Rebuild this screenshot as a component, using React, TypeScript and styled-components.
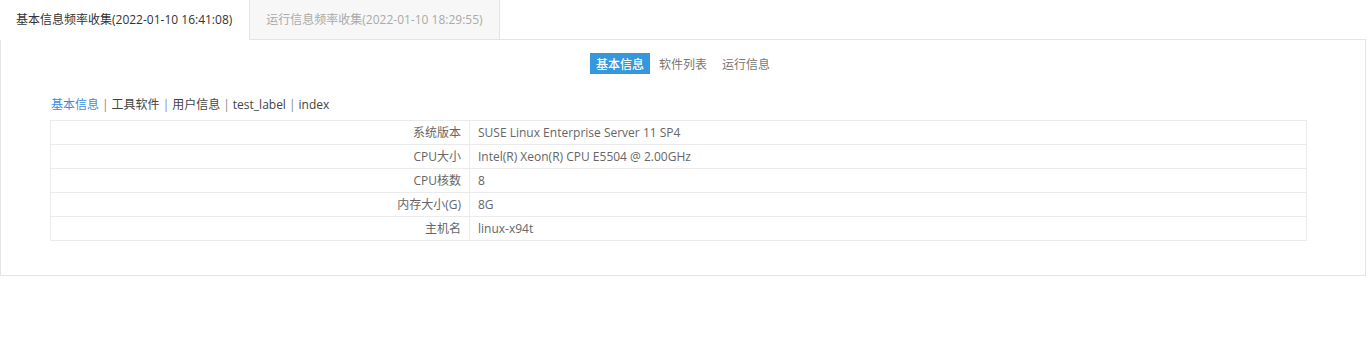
import styled, { createGlobalStyle } from 'styled-components';

const GlobalStyle = createGlobalStyle`
	body {
		margin: 0;
		background: #fff;
		font-family: "Open Sans", "Noto Sans CJK SC", sans-serif;
		font-size: 12px;
		color: #333;
	}
`;

const Wrapper = styled.div`
	width: 1366px;
`;

const TabBar = styled.ul`
	display: flex;
	margin: 0;
	padding: 0;
	list-style: none;
	height: 39px;
	border-bottom: 1px solid #e4e4e4;
`;

const Tab = styled.li<{ $active?: boolean }>`
	display: flex;
	align-items: center;
	height: 38px;
	padding: 0 16px 1px;
	margin-bottom: -1px;
	box-sizing: content-box;
	font-size: 12px;
	color: ${(p) => (p.$active ? '#333' : '#aaa')};
	background: ${(p) => (p.$active ? '#fff' : '#f7f7f7')};
	border: 1px solid ${(p) => (p.$active ? 'transparent' : '#e4e4e4')};
	border-bottom: 1px solid ${(p) => (p.$active ? '#fff' : '#e4e4e4')};
	border-top: none;
	${(p) => (p.$active ? 'border-left: none;' : 'border-left-color: #e4e4e4;')}
`;

const Panel = styled.div`
	border: 1px solid #e4e4e4;
	border-top: none;
	padding: 13px 59px 34px 49px;
`;

const ButtonGroup = styled.div`
	display: flex;
	justify-content: center;
	gap: 3px;
	margin-right: -10px;
`;

const ViewButton = styled.span<{ $active?: boolean }>`
	display: inline-flex;
	align-items: center;
	height: 21px;
	padding: 0 6px;
	font-size: 12px;
	color: ${(p) => (p.$active ? '#fff' : '#777')};
	background: ${(p) => (p.$active ? '#3498db' : 'transparent')};
	font-weight: ${(p) => (p.$active ? 500 : 400)};
`;

const SubNav = styled.div`
	margin-top: 21px;
	line-height: 20px;
	height: 20px;
	margin-bottom: 5px;
	color: #555;
	padding-left: 1px;
`;

const SubLink = styled.span<{ $active?: boolean }>`
	color: ${(p) => (p.$active ? '#3c8dde' : '#444')};
`;

const Sep = styled.span`
	color: #888;
	margin: 0 3px;
`;

const InfoTable = styled.table`
	width: 1257px;
	border-collapse: collapse;
	td {
		height: 22px;
		padding: 0 8px 1px;
		border: 1px solid #ebebeb;
		color: #666;
		font-size: 12px;
	}
	td.label {
		width: 402px;
		text-align: right;
	}
`;

const rows: [string, string][] = [
	['系统版本', 'SUSE Linux Enterprise Server 11 SP4'],
	['CPU大小', 'Intel(R) Xeon(R) CPU E5504 @ 2.00GHz'],
	['CPU核数', '8'],
	['内存大小(G)', '8G'],
	['主机名', 'linux-x94t'],
];

const subLinks = ['基本信息', '工具软件', '用户信息', 'test_label', 'index'];

export default function App() {
	return (
		<Wrapper>
			<GlobalStyle />
			<TabBar>
				<Tab $active>基本信息频率收集(2022-01-10 16:41:08)</Tab>
				<Tab>运行信息频率收集(2022-01-10 18:29:55)</Tab>
			</TabBar>
			<Panel>
				<ButtonGroup>
					<ViewButton $active>基本信息</ViewButton>
					<ViewButton>软件列表</ViewButton>
					<ViewButton>运行信息</ViewButton>
				</ButtonGroup>
				<SubNav>
					{subLinks.map((l, i) => (
						<span key={l}>
							{i > 0 && <Sep>|</Sep>}
							<SubLink $active={i === 0}>{l}</SubLink>
						</span>
					))}
				</SubNav>
				<InfoTable>
					<tbody>
						{rows.map(([k, v]) => (
							<tr key={k}>
								<td className="label">{k}</td>
								<td>{v}</td>
							</tr>
						))}
					</tbody>
				</InfoTable>
			</Panel>
		</Wrapper>
	);
}
